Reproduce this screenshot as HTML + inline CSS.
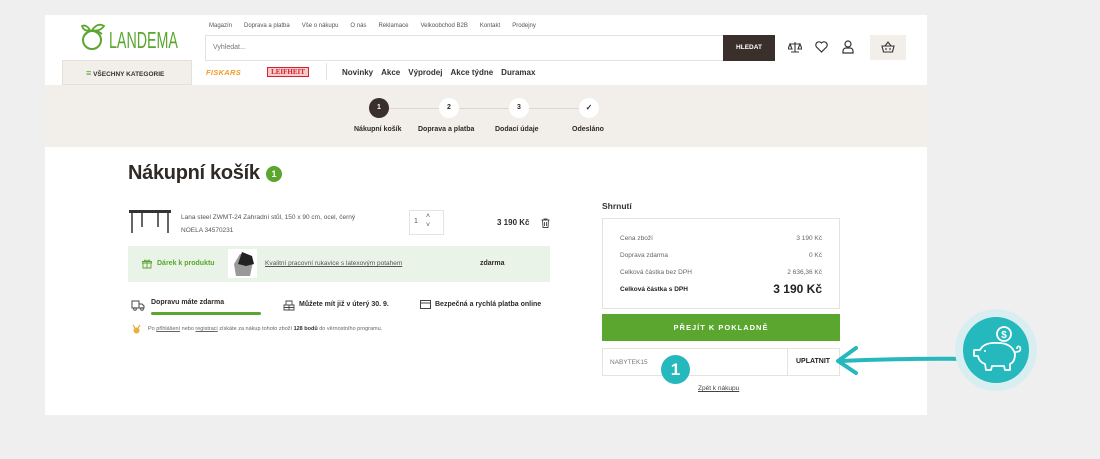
<!DOCTYPE html>
<html><head><meta charset="utf-8"><style>
*{box-sizing:border-box;margin:0;padding:0}
body{width:1100px;height:459px;background:#efefef;font-family:"Liberation Sans",sans-serif;color:#2f2a26;position:relative;overflow:hidden}
.a{position:absolute}
.panel{left:45px;top:15px;width:882px;height:400px;background:#fff}
.t{font-size:7px;color:#555}
.b{font-weight:bold}
</style></head><body>
<div class="a panel"></div>
<!-- logo -->
<svg class="a" style="left:80px;top:22px" width="26" height="30" viewBox="0 0 26 30"><circle cx="12" cy="18" r="9" fill="none" stroke="#5aa62e" stroke-width="2"/><path d="M4 14 Q12 4 22 12 M10 8 Q6 2 2 4 Q4 10 10 8 M12 8 Q18 0 24 4 Q20 10 12 8" fill="none" stroke="#5aa62e" stroke-width="1.8"/></svg>
<div class="a" style="left:109px;top:27px;font-size:23px;color:#5aa62e;transform:scaleX(0.62);transform-origin:left">LANDEMA</div>
<!-- top links -->
<div class="a t" style="left:209px;top:23px;font-size:6px">
<span style="margin-right:12px">Magazín</span><span style="margin-right:12px">Doprava a platba</span><span style="margin-right:12px">Vše o nákupu</span><span style="margin-right:12px">O nás</span><span style="margin-right:12px">Reklamace</span><span style="margin-right:12px">Velkoobchod B2B</span><span style="margin-right:12px">Kontakt</span><span>Prodejny</span></div>
<div class="a" style="left:205px;top:35px;width:570px;height:26px;border:1px solid #e6e2dc;background:#fff"></div>
<div class="a" style="left:213px;top:44px;font-size:7px;color:#777">Vyhledat...</div>
<div class="a" style="left:723px;top:35px;width:52px;height:26px;background:#3a2f2a;color:#fff;font-size:6.5px;font-weight:bold;text-align:center;line-height:26px">HLEDAT</div>
<!-- icons -->
<svg class="a" style="left:788px;top:41px" width="14" height="12" viewBox="0 0 14 12"><path d="M7 1v10M3 11h8M2 3h10M2 3l-2 5h4zM12 3l-2 5h4z" fill="none" stroke="#333" stroke-width="1.1"/></svg>
<svg class="a" style="left:815px;top:41px" width="13" height="12" viewBox="0 0 13 12"><path d="M6.5 11L1.5 6A3 3 0 0 1 6.5 2A3 3 0 0 1 11.5 6z" fill="none" stroke="#333" stroke-width="1.2"/></svg>
<svg class="a" style="left:842px;top:40px" width="12" height="14" viewBox="0 0 12 14"><circle cx="6" cy="4" r="3" fill="none" stroke="#333" stroke-width="1.2"/><path d="M1 13v-2a3 3 0 0 1 3-3h4a3 3 0 0 1 3 3v2z" fill="none" stroke="#333" stroke-width="1.2"/></svg>
<div class="a" style="left:870px;top:35px;width:36px;height:25px;background:#f2efea"></div>
<svg class="a" style="left:881px;top:41px" width="14" height="12" viewBox="0 0 14 12"><path d="M1 5h12l-1.5 6h-9zM4 5l3-4 3 4M5 7v2M9 7v2" fill="none" stroke="#333" stroke-width="1.1"/></svg>
<!-- category bar -->
<div class="a" style="left:62px;top:60px;width:130px;height:25px;background:#f2efea;border:1px solid #e6e0d8"></div>
<div class="a" style="left:86px;top:68px;font-size:6.5px;font-weight:bold;color:#333"><span style="color:#5aa62e;font-size:9px">≡</span> VŠECHNY KATEGORIE</div>
<div class="a" style="left:206px;top:68px;font-size:7.5px;font-weight:bold;color:#f39b1e;letter-spacing:0.3px;font-style:italic">FISKARS</div>
<div class="a" style="left:267px;top:67px;width:42px;height:10px;background:#f7c9cc;border:1px solid #d2232a;color:#d2232a;font-size:7px;font-weight:bold;text-align:center;line-height:8px;font-family:'Liberation Serif',serif">LEIFHEIT</div>
<div class="a" style="left:326px;top:63px;width:1px;height:17px;background:#e6e2dc"></div>
<div class="a b" style="left:342px;top:68px;font-size:8px;color:#333"><span style="margin-right:8px">Novinky</span><span style="margin-right:8px">Akce</span><span style="margin-right:8px">Výprodej</span><span style="margin-right:8px">Akce týdne</span><span>Duramax</span></div>
<!-- steps band -->
<div class="a" style="left:45px;top:85px;width:882px;height:62px;background:#f2efea"></div>
<div class="a" style="left:388px;top:108px;width:200px;height:1px;background:#ddd7ce"></div>
<div class="a" style="left:369px;top:98px;width:20px;height:20px;border-radius:50%;background:#3a2f2a;color:#fff;font-size:7px;font-weight:bold;text-align:center;line-height:20px">1</div>
<div class="a" style="left:439px;top:98px;width:20px;height:20px;border-radius:50%;background:#fff;font-size:7px;font-weight:bold;text-align:center;line-height:20px">2</div>
<div class="a" style="left:509px;top:98px;width:20px;height:20px;border-radius:50%;background:#fff;font-size:7px;font-weight:bold;text-align:center;line-height:20px">3</div>
<div class="a" style="left:579px;top:98px;width:20px;height:20px;border-radius:50%;background:#fff;font-size:8px;font-weight:bold;text-align:center;line-height:20px">✓</div>
<div class="a b" style="left:354px;top:126px;font-size:7px">Nákupní košík</div>
<div class="a b" style="left:418px;top:126px;font-size:7px">Doprava a platba</div>
<div class="a b" style="left:495px;top:126px;font-size:7px">Dodací údaje</div>
<div class="a b" style="left:572px;top:126px;font-size:7px">Odesláno</div>
<!-- title -->
<div class="a b" style="left:128px;top:162px;font-size:20px;color:#2f2a26;letter-spacing:-0.3px">Nákupní košík</div>
<div class="a" style="left:266px;top:166px;width:16px;height:16px;border-radius:50%;background:#5aa62e;color:#fff;font-size:9px;font-weight:bold;text-align:center;line-height:16px">1</div>
<!-- product -->
<svg class="a" style="left:128px;top:207px" width="44" height="28" viewBox="0 0 44 28"><path d="M1 3h42v3H1z" fill="#333"/><path d="M4 6v20M40 6v20M14 6v14M30 6v14" stroke="#333" stroke-width="1.5"/></svg>
<div class="a t" style="left:181px;top:211px;line-height:13px;font-size:6.5px;color:#555">Lana steel ZWMT-24 Zahradní stůl, 150 x 90 cm, ocel, černý<br>NOELA 34570231</div>
<div class="a" style="left:409px;top:210px;width:35px;height:25px;border:1px solid #e6e2dc"></div>
<div class="a" style="left:414px;top:218px;font-size:7px;color:#555">1</div>
<div class="a" style="left:426px;top:212px;font-size:7px;color:#555;line-height:9px">˄<br>˅</div>
<div class="a b" style="left:497px;top:218px;font-size:8px">3 190 Kč</div>
<svg class="a" style="left:541px;top:218px" width="9" height="10" viewBox="0 0 9 10"><path d="M0.5 2h8M3 2V1h3v1M1.5 2l.5 7.5h5L7.5 2M3.5 4v4M5.5 4v4" fill="none" stroke="#444" stroke-width="0.9"/></svg>
<!-- gift -->
<div class="a" style="left:128px;top:246px;width:422px;height:36px;background:#eaf3e7"></div>
<svg class="a" style="left:142px;top:259px" width="10" height="10" viewBox="0 0 10 10"><path d="M1 4h8v5H1zM0.5 2.5h9V4h-9zM5 2.5V9M5 2.5C3 0 1.5 1 3 2.5M5 2.5C7 0 8.5 1 7 2.5" fill="none" stroke="#5aa62e" stroke-width="0.9"/></svg>
<div class="a b" style="left:157px;top:260px;font-size:7px;color:#5aa62e">Dárek k produktu</div>
<div class="a" style="left:228px;top:249px;width:29px;height:29px;background:#fff"></div>
<svg class="a" style="left:230px;top:250px" width="26" height="27" viewBox="0 0 26 27"><path d="M6 26l-2-12 6-10 8 2 5 6-3 14z" fill="#999"/><path d="M8 14l4-12 10 4 2 8-8 2z" fill="#222"/></svg>
<div class="a" style="left:265px;top:260px;font-size:6.5px;color:#555;text-decoration:underline">Kvalitní pracovní rukavice s latexovým potahem</div>
<div class="a b" style="left:480px;top:260px;font-size:7px">zdarma</div>
<!-- delivery row -->
<svg class="a" style="left:131px;top:300px" width="14" height="11" viewBox="0 0 14 11"><path d="M1 1h7v7H1zM8 4h3l2 2v2H8" fill="none" stroke="#444" stroke-width="1"/><circle cx="4" cy="9" r="1.3" fill="#fff" stroke="#444"/><circle cx="11" cy="9" r="1.3" fill="#fff" stroke="#444"/></svg>
<div class="a b" style="left:151px;top:299px;font-size:7px">Dopravu máte zdarma</div>
<div class="a" style="left:151px;top:312px;width:110px;height:3px;background:#5aa62e;border-radius:2px"></div>
<svg class="a" style="left:283px;top:299px" width="12" height="12" viewBox="0 0 12 12"><path d="M1 6h10v5H1zM3 6V2h6v4M6 6v5M1 8.5h10" fill="none" stroke="#444" stroke-width="0.9"/></svg>
<div class="a b" style="left:299px;top:301px;font-size:7px">Můžete mít již v úterý 30. 9.</div>
<svg class="a" style="left:420px;top:300px" width="11" height="9" viewBox="0 0 11 9"><rect x="0.5" y="0.5" width="10" height="8" fill="none" stroke="#444"/><path d="M0.5 3h10" stroke="#444"/></svg>
<div class="a b" style="left:435px;top:301px;font-size:7px">Bezpečná a rychlá platba online</div>
<svg class="a" style="left:132px;top:324px" width="9" height="10" viewBox="0 0 9 10"><path d="M1 1l2 3M8 1l-2 3" stroke="#e2b23a" stroke-width="1.2"/><circle cx="4.5" cy="6.5" r="3" fill="#e2b23a"/></svg>
<div class="a" style="left:148px;top:326px;font-size:5.5px;color:#666">Po <u>přihlášení</u> nebo <u>registraci</u> získáte za nákup tohoto zboží <b style="color:#333">128 bodů</b> do věrnostního programu.</div>
<!-- summary -->
<div class="a b" style="left:602px;top:201px;font-size:8.5px;color:#333">Shrnutí</div>
<div class="a" style="left:602px;top:218px;width:238px;height:91px;border:1px solid #e6e2dc"></div>
<div class="a" style="left:620px;top:230px;width:202px;font-size:6.5px;color:#666;line-height:17px">
<div style="display:flex;justify-content:space-between"><span>Cena zboží</span><span>3 190 Kč</span></div>
<div style="display:flex;justify-content:space-between"><span>Doprava zdarma</span><span>0 Kč</span></div>
<div style="display:flex;justify-content:space-between"><span>Celková částka bez DPH</span><span>2 636,36 Kč</span></div>
<div style="display:flex;justify-content:space-between;align-items:center;color:#222"><b>Celková částka s DPH</b><b style="font-size:12px">3 190 Kč</b></div></div>
<div class="a" style="left:602px;top:314px;width:238px;height:27px;background:#5aa62e;color:#fff;font-size:7.5px;font-weight:bold;letter-spacing:1px;text-align:center;line-height:27px">PŘEJÍT K POKLADNĚ</div>
<div class="a" style="left:602px;top:348px;width:238px;height:28px;border:1px solid #e6e2dc"></div>
<div class="a" style="left:787px;top:348px;width:1px;height:28px;background:#e6e2dc"></div>
<div class="a" style="left:610px;top:359px;font-size:6.5px;color:#777">NABYTEK15</div>
<div class="a b" style="left:796px;top:358px;font-size:7px;color:#222">UPLATNIT</div>
<div class="a" style="left:661px;top:355px;width:29px;height:29px;border-radius:50%;background:#25b8bd;color:#fff;font-size:17px;font-weight:bold;text-align:center;line-height:29px">1</div>
<div class="a" style="left:698px;top:385px;font-size:6.5px;color:#444;text-decoration:underline">Zpět k nákupu</div>
<!-- arrow -->
<svg class="a" style="left:832px;top:340px" width="150" height="40" viewBox="0 0 150 40"><path d="M148 19 Q80 18 8 21 M24 8 L6 21 L24 33" fill="none" stroke="#25b8bd" stroke-width="4" stroke-linecap="round" stroke-linejoin="round"/></svg>
<!-- piggy badge -->
<div class="a" style="left:955px;top:309px;width:82px;height:82px;border-radius:50%;background:#d9eef0"></div>
<div class="a" style="left:963px;top:317px;width:66px;height:66px;border-radius:50%;background:#25b8bd"></div>
<svg class="a" style="left:970px;top:322px" width="56" height="56" viewBox="0 0 56 56"><circle cx="34" cy="12" r="7" fill="none" stroke="#fff" stroke-width="1.8"/><text x="34" y="16" font-size="10" fill="#fff" text-anchor="middle" font-family="Liberation Sans" font-weight="bold">$</text><path d="M10 28 Q14 20 28 21 Q42 21 45 32 Q45 40 40 42 L40 48 L35 48 L34 44 L22 44 L21 48 L16 48 L15 42 Q9 40 8 34 L4 34 L4 28 Z" fill="none" stroke="#fff" stroke-width="1.8" stroke-linejoin="round"/><circle cx="15" cy="29" r="1" fill="#fff"/><path d="M45 30 Q52 30 50 25 Q47 23 47 27" fill="none" stroke="#fff" stroke-width="1.6"/></svg>
</body></html>
